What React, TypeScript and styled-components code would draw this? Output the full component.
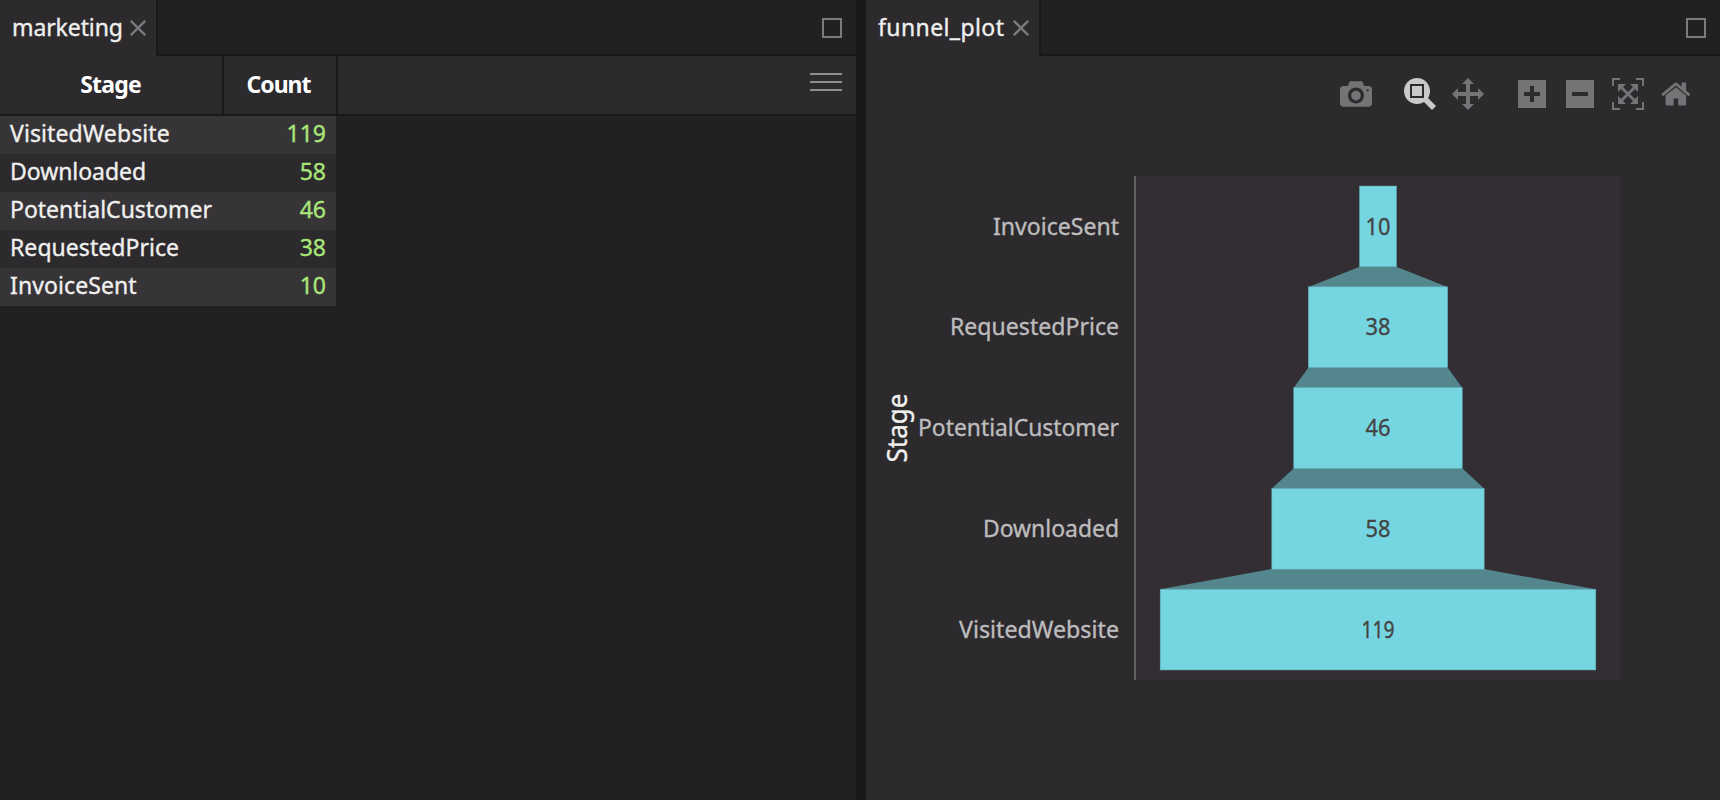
import React from 'react';
import styled, { createGlobalStyle } from 'styled-components';

const c = {
  bg: '#2d2a2e', dark: '#212123', line: '#1a181b', alt: '#373438',
  text: '#f0f0ee', green: '#a9e678', icon: '#757376', plot: '#332e34',
  bar: '#75d6e1', link: '#54868e',
};
const font = "'Noto Sans', 'Open Sans', sans-serif";

const Global = createGlobalStyle`
  * { box-sizing: border-box; }
  body { margin: 0; background: ${c.line}; font-family: ${font}; color: ${c.text}; }
`;
const Layout = styled.div`
  display: grid; grid-template-columns: 856px 1fr; column-gap: 10px;
  width: 1720px; height: 800px; overflow: hidden; background: ${c.line};
`;
const Panel = styled.section<{ $bg: string }>`
  display: flex; flex-direction: column; min-width: 0; background: ${p => p.$bg};
`;
const TabBar = styled.header`display: flex; height: 56px;`;
const Tab = styled.div<{ $w: number }>`
  display: flex; align-items: center; flex: none; width: ${p => p.$w}px;
  padding-left: 12px; background: ${c.bg};
`;
const TabRest = styled.div`
  flex: 1; display: flex; justify-content: flex-end; align-items: flex-start;
  padding: 18px 14px 0 0; background: ${c.dark};
  border-left: 2px solid ${c.line}; border-bottom: 2px solid ${c.line};
`;
const MaxButton = styled.button`
  width: 20px; height: 20px; padding: 0; background: none; border: 2px solid #7b7a7c;
`;
const Label = styled.span<{ $ls: number; $bold?: boolean; $color?: string }>`
  font-size: 23px; line-height: 36px; padding-bottom: 3px; white-space: nowrap;
  letter-spacing: ${p => p.$ls}px; font-weight: ${p => (p.$bold ? 700 : 400)};
  color: ${p => p.$color ?? c.text};
  -webkit-text-stroke: ${p => (p.$bold ? 0 : 0.35)}px currentColor;
`;
const TabLabel = styled(Label)<{ $w: number }>`width: ${p => p.$w}px;`;
const HeadRow = styled.div`
  display: flex; height: 60px; background: ${c.bg}; border-bottom: 2px solid ${c.line};
`;
const HeadCell = styled.div<{ $w: number; $pr?: number }>`
  display: flex; align-items: center; justify-content: center; width: ${p => p.$w}px;
  padding-right: ${p => p.$pr ?? 0}px; border-right: 2px solid ${c.line};
`;
const HeadRest = styled.div`
  flex: 1; display: flex; justify-content: flex-end; padding: 17px 14px 0 0;
`;
const Menu = styled.button`
  display: flex; flex-direction: column; justify-content: space-between;
  width: 32px; height: 18px; padding: 0; border: 0; background: none;
`;
const MenuLine = styled.span`display: block; height: 2px; background: #8f8d90;`;
const Row = styled.div<{ $alt: boolean }>`
  display: flex; justify-content: space-between; align-items: center;
  width: 336px; height: 38px; padding: 0 10px 2px; background: ${p => (p.$alt ? c.alt : c.bg)};
`;
const ModeBar = styled.div`
  display: flex; justify-content: flex-end; gap: 16px; height: 54px; padding: 22px 20px 0 0;
`;
const Group = styled.div`display: flex;`;
const Tool = styled.button`
  display: flex; justify-content: center; width: 48px; height: 32px;
  padding: 0; border: 0; background: none;
`;
const Chart = styled.svg`display: block; width: 854px; height: 690px;`;
const ChartText = styled.text<{ $color: string }>`
  fill: ${p => p.$color}; stroke: ${p => p.$color}; stroke-width: 0.35px;
`;

const paths: Record<string, string> = {
  camera: 'm500 450c-83 0-150-67-150-150 0-83 67-150 150-150 83 0 150 67 150 150 0 83-67 150-150 150z m400 150h-120c-16 0-34 13-39 29l-31 93c-6 15-23 28-40 28h-340c-16 0-34-13-39-28l-31-94c-6-15-23-28-40-28h-120c-55 0-100-45-100-100v-450c0-55 45-100 100-100h800c55 0 100 45 100 100v450c0 55-45 100-100 100z m-400-550c-138 0-250 112-250 250 0 138 112 250 250 250 138 0 250-112 250-250 0-138-112-250-250-250z m365 380c-19 0-35 16-35 35 0 19 16 35 35 35 19 0 35-16 35-35 0-19-16-35-35-35z',
  zoom: 'm1000-25l-250 251c40 63 63 138 63 218 0 224-182 406-407 406-224 0-406-182-406-406s183-406 407-406c80 0 155 22 218 62l250-250 125 125z m-812 250l0 438 437 0 0-438-437 0z m62 375l313 0 0-312-313 0 0 312z',
  pan: 'm1000 350l-187 188 0-125-250 0 0 250 125 0-188 187-187-187 125 0 0-250-250 0 0 125-188-188 186-187 0 125 252 0 0-250-125 0 187-188 188 188-125 0 0 250 250 0 0-126 187 188z',
  plus: 'm1 787l0-875 875 0 0 875-875 0z m687-500l-187 0 0-187-125 0 0 187-188 0 0 125 188 0 0 187 125 0 0-187 187 0 0-125z',
  minus: 'm0 788l0-876 875 0 0 876-875 0z m688-500l-500 0 0 125 500 0 0-125z',
  fit: 'm250 850l-187 0-63 0 0-62 0-188 63 0 0 188 187 0 0 62z m688 0l-188 0 0-62 188 0 0-188 62 0 0 188 0 62-62 0z m-875-938l0 188-63 0 0-188 0-62 63 0 187 0 0 62-187 0z m875 188l0-188-188 0 0-62 188 0 62 0 0 62 0 188-62 0z m-125 188l-1 0-93-94-156 156 156 156 92-93 2 0 0 250-250 0 0-2 93-92-156-156-156 156 94 92 0 2-250 0 0-250 0 0 93 93 157-156-157-156-93 94 0 0 0-250 250 0 0 0-94 93 156 157 156-157-93-93 0 0 250 0 0 250z',
  home: 'm786 296v-267q0-15-11-26t-25-10h-214v214h-143v-214h-214q-15 0-25 10t-11 26v267q0 1 0 2t0 2l321 264 321-264q1-1 1-4z m124 39l-34-41q-5-5-12-6h-2q-7 0-12 3l-386 322-386-322q-7-4-13-4-7 2-12 7l-35 41q-4 5-3 13t6 12l401 334q18 15 42 15t43-15l136-114v109q0 8 5 13t13 5h107q8 0 13-5t5-13v-227l122-102q5-5 6-12t-4-13z',
};
const unitWidth: Record<string, number> = { plus: 875, minus: 875, home: 928.6 };

const ToolIcon = ({ name }: { name: string }) => {
  const w = unitWidth[name] ?? 1000;
  return (
    <Tool aria-label={name}>
      <svg width={w * 0.032} height={32} viewBox={`0 0 ${w} 1000`}>
        <path d={paths[name]} transform="matrix(1 0 0 -1 0 850)" fill={name === 'zoom' ? '#cac9ca' : c.icon} />
      </svg>
    </Tool>
  );
};

const CloseIcon = () => (
  <svg width="16" height="16" viewBox="0 0 16 16">
    <path d="M0.8 0.8L15.2 15.2M15.2 0.8L0.8 15.2" stroke="#7b7a7c" strokeWidth="2.3" />
  </svg>
);

// ls: letter spacing in the table; w: width of the axis label
const data = [
  { stage: 'VisitedWebsite', count: 119, ls: 0.1, w: 160 },
  { stage: 'Downloaded', count: 58, ls: -0.05, w: 136 },
  { stage: 'PotentialCustomer', count: 46, ls: -0.03, w: 201 },
  { stage: 'RequestedPrice', count: 38, ls: 0.05, w: 169 },
  { stage: 'InvoiceSent', count: 10, ls: 0.1, w: 126 },
];

const mid = 512;
const unit = 3.66;
const slot = 100.8;
const barH = 80.64;
const top = 76.08;

const Funnel = () => {
  const bars = [...data].reverse().map((d, i) => ({
    ...d, y: top + i * slot, l: mid - (d.count * unit) / 2, r: mid + (d.count * unit) / 2,
  }));
  return (
    <Chart viewBox="0 0 854 690" fontFamily={font} fontSize="23">
      <rect x="269" y="66" width="485" height="504" fill={c.plot} />
      <rect x="268" y="66" width="2" height="504" fill="#626063" />
      {bars.slice(0, -1).map((b, i) => {
        const n = bars[i + 1];
        return <path key={b.stage} fill={c.link} d={`M${b.l} ${b.y + barH}H${b.r}L${n.r} ${n.y}H${n.l}Z`} />;
      })}
      {bars.map(b => (
        <React.Fragment key={b.stage}>
          <rect x={b.l} y={b.y} width={b.r - b.l} height={barH} fill={c.bar} stroke="#67b9c2" strokeWidth="0.6" />
          <ChartText $color="#444" x={mid} y={b.y + 48.6} textAnchor="middle" textLength={b.count > 99 ? 33 : 25} lengthAdjust="spacingAndGlyphs">{b.count}</ChartText>
          <ChartText $color="#bdbcbd" x={253} y={b.y + 48.6} textAnchor="end" textLength={b.w} lengthAdjust="spacingAndGlyphs">{b.stage}</ChartText>
        </React.Fragment>
      ))}
      <ChartText $color={c.text} transform="translate(40.5 318) rotate(-90)" textAnchor="middle" fontSize="26.5" strokeWidth="0.6" textLength="69" lengthAdjust="spacingAndGlyphs">Stage</ChartText>
    </Chart>
  );
};

export default function App() {
  return (
    <Layout>
      <Global />
      <Panel $bg={c.dark}>
        <TabBar>
          <Tab $w={156}><TabLabel $w={118} $ls={-0.1}>marketing</TabLabel><CloseIcon /></Tab>
          <TabRest><MaxButton aria-label="Maximize" /></TabRest>
        </TabBar>
        <HeadRow>
          <HeadCell $w={224} $pr={1}><Label $ls={-0.8} $bold $color="#fff">Stage</Label></HeadCell>
          <HeadCell $w={114} $pr={3}><Label $ls={-1} $bold $color="#fff">Count</Label></HeadCell>
          <HeadRest><Menu aria-label="Menu"><MenuLine /><MenuLine /><MenuLine /></Menu></HeadRest>
        </HeadRow>
        {data.map((d, i) => (
          <Row key={d.stage} $alt={i % 2 === 0}>
            <Label $ls={d.ls}>{d.stage}</Label>
            <Label $ls={0} $color={c.green}>{d.count}</Label>
          </Row>
        ))}
      </Panel>
      <Panel $bg={c.bg}>
        <TabBar>
          <Tab $w={173}><TabLabel $w={135} $ls={0.4}>funnel_plot</TabLabel><CloseIcon /></Tab>
          <TabRest><MaxButton aria-label="Maximize" /></TabRest>
        </TabBar>
        <ModeBar>
          <Group><ToolIcon name="camera" /></Group>
          <Group><ToolIcon name="zoom" /><ToolIcon name="pan" /></Group>
          <Group><ToolIcon name="plus" /><ToolIcon name="minus" /><ToolIcon name="fit" /><ToolIcon name="home" /></Group>
        </ModeBar>
        <Funnel />
      </Panel>
    </Layout>
  );
}
